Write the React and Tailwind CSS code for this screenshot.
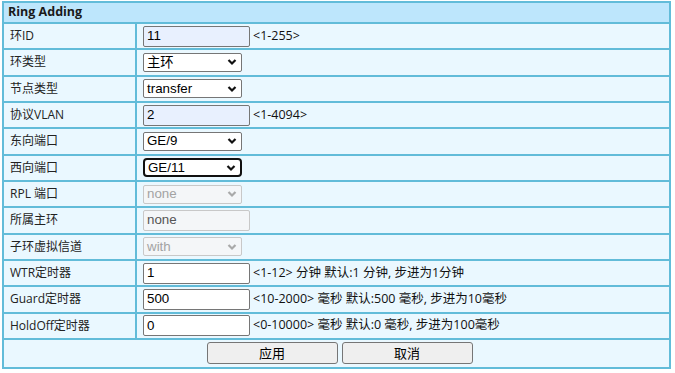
import React from "react";

const rows = [
  { label: "环ID", kind: "input", value: "11", fill: true, hint: "<1-255>" },
  { label: "环类型", kind: "select", value: "主环" },
  { label: "节点类型", kind: "select", value: "transfer" },
  { label: "协议VLAN", kind: "input", value: "2", fill: true, hint: "<1-4094>" },
  { label: "东向端口", kind: "select", value: "GE/9" },
  { label: "西向端口", kind: "select", value: "GE/11", focus: true },
  { label: "RPL 端口", kind: "select", value: "none", disabled: true },
  { label: "所属主环", kind: "input", value: "none", disabled: true },
  { label: "子环虚拟信道", kind: "select", value: "with", disabled: true },
  { label: "WTR定时器", kind: "input", value: "1", hint: "<1-12> 分钟 默认:1 分钟, 步进为1分钟" },
  { label: "Guard定时器", kind: "input", value: "500", hint: "<10-2000> 毫秒 默认:500 毫秒, 步进为10毫秒" },
  { label: "HoldOff定时器", kind: "input", value: "0", hint: "<0-10000> 毫秒 默认:0 毫秒, 步进为100毫秒" },
];

function Chevron({ disabled }) {
  return (
    <svg width="10" height="7" viewBox="0 0 10 7" className="absolute right-[4px] top-1/2 -translate-y-1/2">
      <polyline
        points="1.5,1.5 5,5 8.5,1.5"
        fill="none"
        stroke={disabled ? "#a9a9a9" : "#111"}
        strokeWidth="2.2"
      />
    </svg>
  );
}

function Field({ row }) {
  if (row.kind === "select") {
    return (
      <div
        className={`relative w-[99px] h-[19px] flex items-center pl-[3px] rounded-[2px] font-['Liberation_Sans','Noto_Sans_CJK_SC',sans-serif] text-[13.33px] ${
          row.disabled
            ? "bg-[#f4f6f8] border border-[#c8c8c8] text-[#a3a3a3]"
            : row.focus
            ? "bg-white border-2 border-[#101010] rounded-[4px] pl-[2px] text-black"
            : "bg-white border border-[#767676] text-black"
        }`}
      >
        {row.value}
        <Chevron disabled={row.disabled} />
      </div>
    );
  }
  return (
    <div className="flex items-center">
      <div
        className={`w-[107px] h-[21px] flex items-center pl-[3px] rounded-[2px] font-['Liberation_Sans','Noto_Sans_CJK_SC',sans-serif] text-[13.33px] ${
          row.disabled
            ? "bg-[#f4f6f8] border border-[#c8c8c8] text-[#545454]"
            : row.fill
            ? "bg-[#e8f0fe] border border-[#767676] text-black"
            : "bg-white border border-[#767676] text-black"
        }`}
      >
        {row.value}
      </div>
      {row.hint && <span className="ml-[3px] text-[12.5px] text-[#111]">{row.hint}</span>}
    </div>
  );
}

export default function App() {
  return (
    <div className="w-[675px] h-[373px] bg-white pt-[1px] font-['Open_Sans','Noto_Sans_CJK_SC',sans-serif]">
      <div className="ml-[2px] w-[669px] border-2 border-[#62bcd9] bg-[#eaf8ff]">
        {/* Header */}
        <div className="h-[21px] bg-[#bde6fc] border-b-2 border-[#62bcd9] pl-[4px] flex items-center text-[12.5px] font-bold text-[#1a1a1a]">
          Ring Adding
        </div>

        {rows.map((row, i) => (
          <div key={i} className="h-[26.33px] flex border-b-2 border-[#62bcd9]">
            <div className="w-[133px] border-r-2 border-[#62bcd9] pl-[6px] flex items-center text-[12px] text-[#222]">
              {row.label}
            </div>
            <div className="flex-1 pl-[6px] flex items-center">
              <Field row={row} />
            </div>
          </div>
        ))}

        {/* Buttons */}
        <div className="h-[27px] flex items-center justify-center gap-[4px] pl-[6px]">
          <button className="w-[131px] h-[22px] bg-[#efefef] border border-[#767676] rounded-[3px] text-[13px] text-black">
            应用
          </button>
          <button className="w-[131px] h-[22px] bg-[#efefef] border border-[#767676] rounded-[3px] text-[13px] text-black">
            取消
          </button>
        </div>
      </div>
    </div>
  );
}
